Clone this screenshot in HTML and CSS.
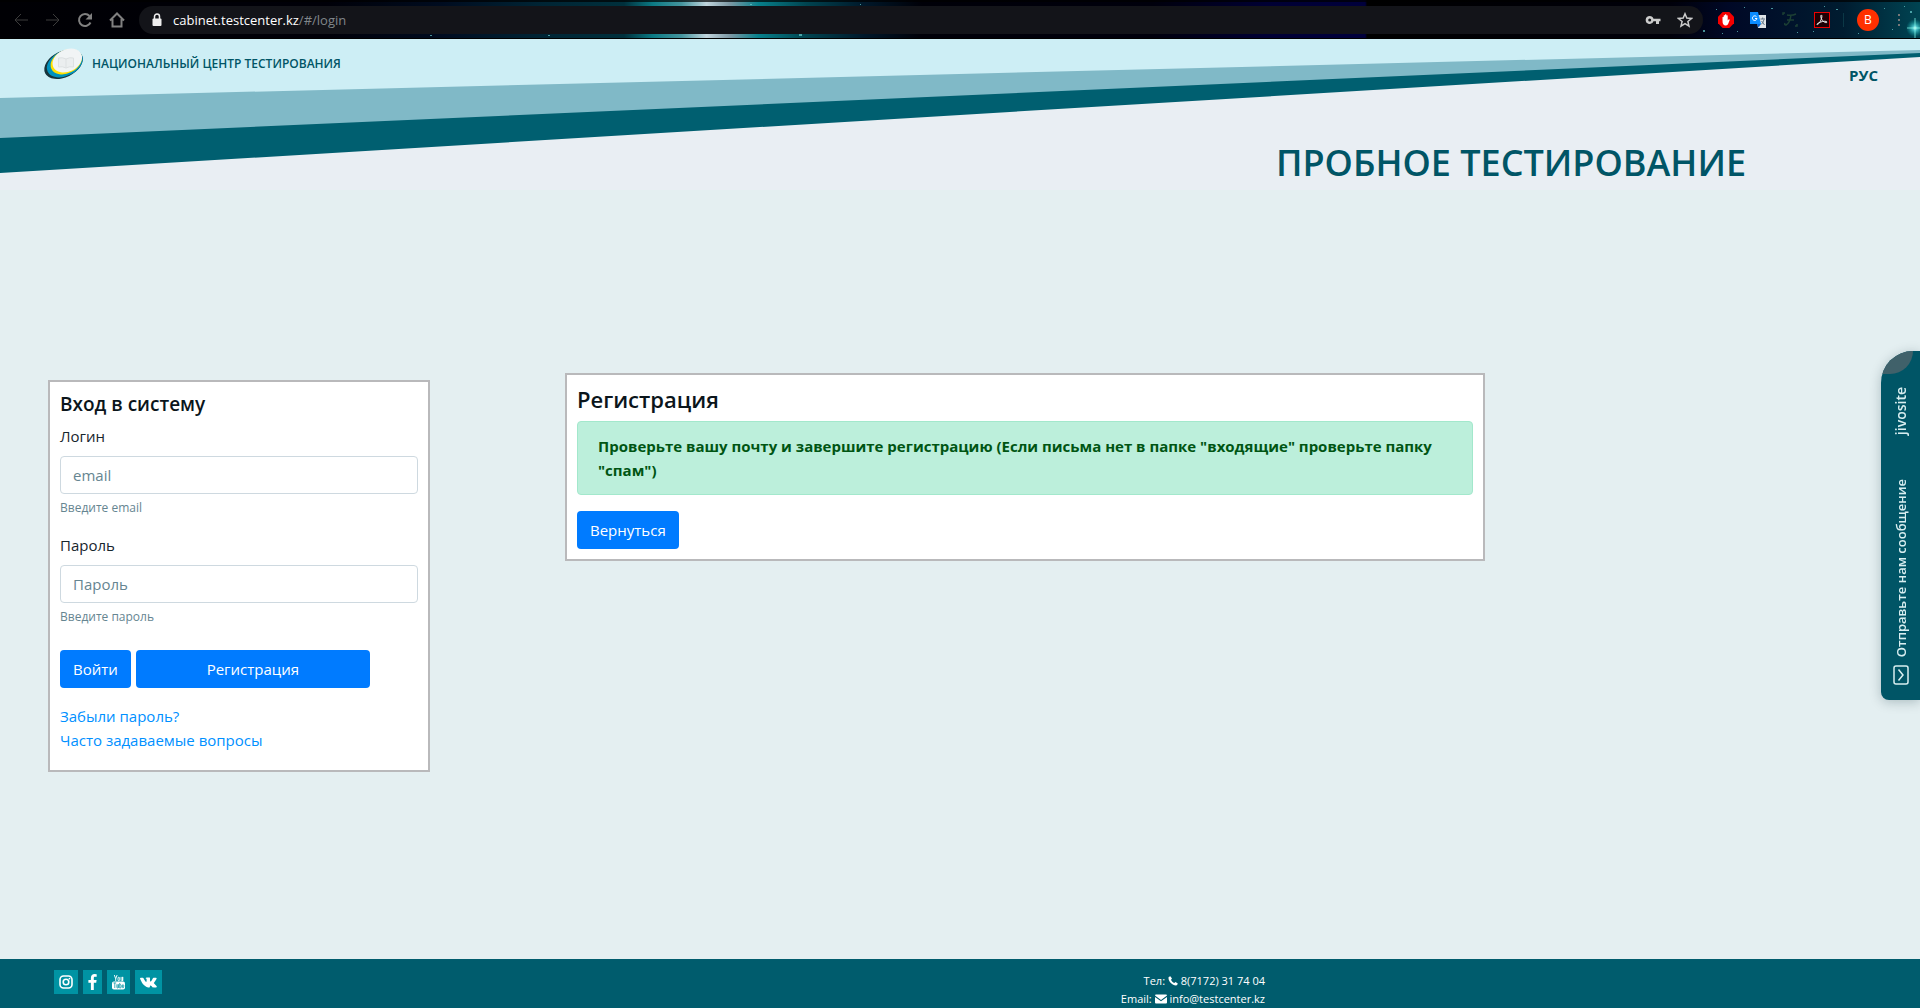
FILE: index.html
```
<!DOCTYPE html>
<html lang="ru">
<head>
<meta charset="utf-8">
<meta name="viewport" content="width=device-width, initial-scale=1">
<title>Пробное тестирование</title>
<link rel="stylesheet" href="styles.css">
</head>
<body>
<div class="toolbar">
  <svg class="stars" viewBox="0 0 1920 39" preserveAspectRatio="none" aria-hidden="true">
    <defs>
      <linearGradient id="sky">
        <stop offset="0" stop-color="#000004"/><stop offset=".17" stop-color="#000008"/><stop offset=".23" stop-color="#000c20"/>
        <stop offset=".28" stop-color="#002434"/><stop offset=".325" stop-color="#00303c"/><stop offset=".34" stop-color="#0b7a84"/>
        <stop offset=".355" stop-color="#45959e"/><stop offset=".368" stop-color="#c0d4dc"/><stop offset=".38" stop-color="#7d98a4"/>
        <stop offset=".395" stop-color="#07808b"/><stop offset=".42" stop-color="#004450"/><stop offset=".45" stop-color="#00182a"/>
        <stop offset=".48" stop-color="#000008"/><stop offset=".6" stop-color="#00000c"/><stop offset=".66" stop-color="#000034"/><stop offset=".711" stop-color="#00003c"/>
        <stop offset=".712" stop-color="#000"/><stop offset=".87" stop-color="#00000a"/><stop offset=".9" stop-color="#000826"/>
        <stop offset=".96" stop-color="#001c30"/><stop offset="1" stop-color="#004452"/>
      </linearGradient>
      <radialGradient id="glow"><stop offset="0" stop-color="#fff"/><stop offset=".25" stop-color="#5fe0e6" stop-opacity=".8"/><stop offset="1" stop-color="#0aa" stop-opacity="0"/></radialGradient>
    </defs>
    <rect width="1920" height="39" fill="url(#sky)"/>
    <rect width="1920" height="2" fill="#000" opacity=".7"/>
    <rect y="38" width="1920" height="1" fill="#000"/>
    <circle cx="1915" cy="28" r="9" fill="url(#glow)"/>
    <path d="M1915 18v20M1907 28h13" stroke="#8fe" stroke-width="1" opacity=".7"/>
    <g fill="#6cc" opacity=".7">
      <path d="M1703 30h2v2h-2zM1716 9h1v1h-1zM1744 7h1v1h-1zM1762 27h1v1h-1zM1771 8h2v1h-2zM1797 32h1v1h-1zM1824 6h1v1h-1zM1836 9h2v1h-2zM1858 33h1v1h-1zM1875 12h1v1h-1zM1884 8h1v1h-1zM1892 29h1v1h-1zM1904 6h1v1h-1zM1910 11h2v2h-2zM1722 33h1v1h-1zM1737 31h1v1h-1zM1813 31h1v1h-1zM750 4h2v1h-2zM799 34h3v2h-3zM860 4h1v1h-1zM548 35h2v1h-2zM430 35h2v1h-2z"/>
    </g>
  </svg>
  <nav class="toolbar-nav" aria-label="Навигация">
    <button type="button" class="tool dim" aria-label="Назад"><svg viewBox="0 0 16 16"><path d="M15 8H2M8 2 2 8l6 6"/></svg></button>
    <button type="button" class="tool dim" aria-label="Вперёд"><svg viewBox="0 0 16 16"><path d="M1 8h13M8 2l6 6-6 6"/></svg></button>
    <button type="button" class="tool" aria-label="Обновить"><svg viewBox="0 0 16 16"><path class="thick" d="M13.5 10.500A6 6 0 1 1 12.500 4"/><path class="solid" d="M15 1v6.500H8.500z"/></svg></button>
    <button type="button" class="tool" aria-label="Домой"><svg viewBox="0 0 16 16"><path class="thick" d="M1 8.500 8 1.500l7 7M3.500 7v7.500h9V7"/></svg></button>
  </nav>
  <div class="address">
    <svg class="lock" viewBox="0 0 10 14" aria-hidden="true"><path d="M2.500 6V3.500a2.500 2.500 0 0 1 5 0V6" fill="none" stroke="#eee" stroke-width="1.500"/><rect x=".5" y="5.500" width="9" height="7.500" rx="1" fill="#eee"/></svg>
    <span class="url">cabinet.testcenter.kz<span class="path">/#/login</span></span>
    <button type="button" class="tool bright" aria-label="Пароли"><svg viewBox="0 0 16 16"><path class="solid" fill-rule="evenodd" d="M4.700 4a4 4 0 1 0 3.800 5.200H11V12h3V9.200h1.500V6.800H8.500A4 4 0 0 0 4.700 4zm0 2.500a1.500 1.500 0 1 1 0 3 1.500 1.500 0 0 1 0-3z"/></svg></button>
    <button type="button" class="tool bright" aria-label="В закладки"><svg viewBox="0 0 16 16"><path class="thick" d="m8 1.800 1.800 4.300 4.700.4-3.600 3 1.100 4.600L8 11.700l-4 2.400 1.100-4.600-3.600-3 4.700-.4z"/></svg></button>
  </div>
  <div class="extensions">
    <button type="button" class="tool" aria-label="Блокировщик рекламы"><svg viewBox="0 0 16 16"><path fill="#f40000" stroke="none" d="M4.700 0h6.600L16 4.700v6.600L11.300 16H4.700L0 11.300V4.700z"/><path fill="#fff" stroke="none" d="M4.500 8.500V5.200q.7-.8 1.200 0V3.400q.7-.9 1.300 0v-.8q.7-.9 1.400 0v.9q.8-.7 1.300.1V8.500l1.100-1.300q1-.2.900.7L10 12.200Q8.800 14 7 13.500 4.500 13 4.500 8.500z"/></svg></button>
    <button type="button" class="tool" aria-label="Переводчик"><svg viewBox="0 0 16 16"><path fill="#dfe3e6" stroke="none" d="M6 3h10v13H8z"/><path fill="#0b8cff" stroke="none" d="M0 0h8l3 12H0z"/><path fill="#0563cf" stroke="none" d="m7 12 4 0-2.500 3.500z"/><path d="M6.500 4.700A2.300 2.300 0 1 0 7 6.500H5" stroke="#fff"/><path d="M10.500 7h4.500M12.700 5.500V7M14 7.500q-1 4-3 5M11.500 9l3 4" stroke="#678"/></svg></button>
    <button type="button" class="tool" aria-label="Шрифты"><svg viewBox="0 0 16 16"><path d="M5 3q5 1 9-1M9 3Q8 11 4 13q-2 0-1-2M5 8h7M1 3V1h2M13 14h2v-2" stroke="#1c4034" stroke-width="1.500"/></svg></button>
    <button type="button" class="tool" aria-label="PDF"><svg viewBox="0 0 16 16"><rect x=".5" y=".5" width="15" height="15" fill="#200004" stroke="#e00"/><path d="M3.200 12.700c1.500 0 5.300-6 4.600-9.200-.9-1.500-1.500 1-.4 3.300C8.800 9.500 12 11.600 13 10.200 13 8.500 7 9.200 3.500 11.500q-1 .9-.3 1.200z" stroke="#eee"/></svg></button>
    <span class="divider"></span>
    <button type="button" class="avatar">В</button>
    <button type="button" class="tool" aria-label="Меню"><svg viewBox="0 0 16 16"><path fill="#777" stroke="none" d="M7 2h2v2H7zM7 7h2v2H7zM7 12h2v2H7z"/></svg></button>
  </div>
</div>

<header class="header">
  <svg class="ribbon" viewBox="0 0 1920 151" preserveAspectRatio="none" aria-hidden="true">
    <path fill="#cdeef5" d="M0 0h1920v12L0 60z"/>
    <path fill="#80b9c7" d="M0 59 1920 11v5L0 100z"/>
    <path fill="#005f70" d="M0 99 1920 14v4L0 134z"/>
  </svg>
  <a class="brand" href="#">
    <svg class="logo" viewBox="0 0 40 30" aria-hidden="true">
      <g transform="rotate(-26 20 15)">
        <ellipse cx="19.500" cy="15" rx="20.500" ry="13" fill="#17343b"/>
        <ellipse cx="21" cy="14.800" rx="19" ry="12.500" fill="#0092bd"/>
        <ellipse cx="23" cy="14" rx="16.500" ry="11.500" fill="#ffe000"/>
        <ellipse cx="24.500" cy="13.300" rx="15.500" ry="11" fill="#f1f4f5"/>
      </g>
      <path d="M14.500 9q4-1 7.500 1 3.500-2 7.500-1v9q-4-1-7.500 1-3.500-2-7.500-1zM22 10v9" fill="#ebeeef" stroke="#dde1e2"/>
    </svg>
    <span>НАЦИОНАЛЬНЫЙ ЦЕНТР ТЕСТИРОВАНИЯ</span>
  </a>
  <a class="lang" href="#">РУС</a>
  <h1 class="headline">ПРОБНОЕ ТЕСТИРОВАНИЕ</h1>
</header>

<main class="main">
  <form class="card login">
    <h2 class="login-title">Вход в систему</h2>
    <div class="group">
      <label for="email">Логин</label>
      <input class="field" id="email" type="email" placeholder="email">
      <small class="hint">Введите email</small>
    </div>
    <div class="group">
      <label for="password">Пароль</label>
      <input class="field" id="password" type="password" placeholder="Пароль">
      <small class="hint">Введите пароль</small>
    </div>
    <div class="actions">
      <button class="btn" type="submit">Войти</button>
      <button class="btn btn-wide" type="button">Регистрация</button>
    </div>
    <div class="links">
      <a href="#">Забыли пароль?</a>
      <a href="#">Часто задаваемые вопросы</a>
    </div>
  </form>
  <section class="card">
    <h2 class="card-title">Регистрация</h2>
    <div class="alert" role="alert">Проверьте вашу почту и завершите регистрацию (Если письма нет в папке "входящие" проверьте папку "спам")</div>
    <button class="btn" type="button">Вернуться</button>
  </section>
</main>

<footer class="footer">
  <div class="social">
    <a href="#" aria-label="Instagram"><svg viewBox="0 0 14 14" width="14" height="14"><rect x="1" y="1" width="12" height="12" rx="3.500" fill="none" stroke="#fff" stroke-width="1.600"/><circle cx="7" cy="7" r="2.800" fill="none" stroke="#fff" stroke-width="1.600"/><circle cx="10.500" cy="3.600" r=".9" fill="#fff"/></svg></a>
    <a href="#" aria-label="Facebook"><svg viewBox="0 0 9 16" width="9" height="16"><path fill="#fff" d="M8.700.2v2.600H7.200C6 2.800 5.800 3.300 5.800 4.200V6h2.800l-.4 2.700H5.800V16H2.900V8.700H.4V6h2.500V3.900C2.900 1.400 4.400 0 6.600 0z"/></svg></a>
    <a href="#" aria-label="YouTube"><svg viewBox="0 0 14 16" width="13" height="16"><path d="m2.500.5 1.500 4V7m1.500-6.500L4 4.500M8 3.200q-1.500-1-1.500.5v2q0 1.500 1.300.8.400-.3.400-1V4q0-.6-.2-.8M9.800 2.500v3.700q.3 1.200 1.700 0V2.500V7" fill="none" stroke="#fff"/><rect y="7.500" width="14" height="8.500" rx="2" fill="#fff"/><path d="M1.500 9h3M3 9v5.500M5.200 10.500V14q.5.800 1.500 0v-3.500V14.500M8.300 9v5.500q1.500.2 1.500-1v-2q0-1-1.500-.5M12.800 13q-.2 1.500-1.300 1.200-.6-.3-.6-1.700 0-2 1.300-1.500.6.300.4 1.600h-1.700" fill="none" stroke="#0093a3" stroke-width=".8"/></svg></a>
    <a href="#" aria-label="ВКонтакте"><svg viewBox="0 0 18 11" width="17" height="11"><path fill="#fff" d="M8.800 10.700h1.100s.6-.1.600-.7c0-1.400.4-1.900 1.600-.8 1.100 1.200 1.400 1.500 2.300 1.500h2.400c1.300 0 1.300-.9.400-1.800l-2.200-2.300c-.4-.4-.4-.7 0-1.200l2-2.900c.8-1.200 1-2-.1-2h-2.400c-.6 0-.8.200-1 .7-.7 1.500-1.600 2.800-2.300 3.300-.5.200-.6-.2-.6-.8V1.400C10.600.6 10.500.3 9.900.2 8.700 0 7.300 0 6.400.5c-.7.400-.4.500 0 .7.600.2.700.8.600 2.300 0 1.900-.6 1.800-1.500.5C4.900 3.200 4.200 2 3.900 1.200 3.700.7 3.400.5 2.900.5H.8C.2.500-.1.800.1 1.400c1.500 3.500 3.600 8 8.700 9.300z"/></svg></a>
  </div>
  <address class="contacts">
    <span>Тел: <svg viewBox="0 0 10 10" width="10" height="10" aria-hidden="true"><path fill="#fff" d="M2.300.2.700 1C-.6 4.800 5 10.500 9 9.300l.8-1.800L7.500 6l-1.200 1C4.800 6.300 3.600 5.100 3 3.700l1-1.200z"/></svg> <a href="tel:+77172317404">8(7172) 31 74 04</a></span>
    <span>Email: <svg viewBox="0 0 12 10" width="12" height="10" aria-hidden="true"><path fill="#fff" d="M1 .500h10q1 0 1 1L6 6 0 1.500q0-1 1-1zM0 3l6 4.300L12 3v5.500q0 1-1 1H1q-1 0-1-1z"/></svg> <a href="mailto:info@testcenter.kz">info@testcenter.kz</a></span>
  </address>
</footer>

<button class="chat" type="button">
  <span class="leaf"></span>
  <span class="chat-brand">jivosite</span>
  <span class="chat-text">Отправьте нам сообщение</span>
  <svg class="chat-icon" viewBox="0 0 16 20" width="16" height="20" aria-hidden="true"><rect x="1" y="1" width="14" height="18" rx="2" fill="none" stroke="#d8eef0" stroke-width="1.500"/><path d="m5.500 4.500 4.500 5.500-4.500 5.500" fill="none" stroke="#d8eef0" stroke-width="1.500"/></svg>
</button>
</body>
</html>
```
FILE: styles.css
```
* { box-sizing: border-box; }

body {
  margin: 0;
  min-height: 100vh;
  display: flex;
  flex-direction: column;
  background: #e4eff1;
  color: #17262d;
  font: 15px/24px "Segoe UI", "Open Sans", "Noto Sans", sans-serif;
}

a { color: inherit; text-decoration: none; }
button, input { font: inherit; }
h1, h2 { margin: 0; font-weight: 600; }

/* Browser toolbar */
.toolbar {
  position: relative;
  display: flex;
  align-items: center;
  height: 39px;
  padding-left: 13px;
  background: #000;
}
.stars { position: absolute; inset: 0; width: 100%; height: 100%; }
.toolbar-nav, .address, .extensions { position: relative; display: flex; align-items: center; }
.toolbar-nav { gap: 16px; margin-right: 14px; }
.tool {
  width: 16px;
  height: 16px;
  padding: 0;
  border: 0;
  background: none;
  color: #808080;
}
.tool svg { display: block; width: 16px; height: 16px; fill: none; stroke: currentColor; }
.tool .thick { stroke-width: 2; }
.tool .solid { fill: currentColor; stroke: none; }
.dim { color: #3c3c3c; }
.bright { color: #ccc; }
.bright .thick { stroke-width: 1.5; }
.address {
  flex: 1;
  gap: 16px;
  height: 28px;
  padding: 0 10px 0 13px;
  border-radius: 14px;
  background: #131419;
}
.lock { width: 10px; height: 14px; }
.url { flex: 1; margin-left: -5px; color: #fff; font-size: 13px; }
.path { color: #80868a; }
.extensions { gap: 16px; padding: 0 13px 0 15px; }
.divider { width: 1px; height: 14px; margin: 0 -3px; background: #0b3846; }
.avatar {
  width: 22px;
  height: 22px;
  margin-right: -4px;
  padding: 0;
  border: 0;
  border-radius: 50%;
  background: #ff3000;
  color: #fff;
  font-size: 12px;
  line-height: 22px;
}

/* Page header */
.header {
  position: relative;
  display: grid;
  grid-template: 102px auto / 1fr auto;
  align-content: start;
  align-items: start;
  height: 151px;
  background: #e9eef3;
  color: #005566;
}
.ribbon { position: absolute; inset: 0; width: 100%; height: 100%; }
.brand {
  position: relative;
  display: flex;
  align-items: center;
  gap: 8px;
  margin: 10px 0 0 44px;
  font-size: 12px;
  font-weight: 600;
}
.logo { width: 40px; height: 30px; overflow: visible; }
.lang { position: relative; margin: 24px 42px 0 0; font-weight: 700; }
.headline {
  position: relative;
  grid-column: 1 / -1;
  justify-self: end;
  margin-right: 174px;
  font-size: 36px;
  line-height: 44px;
}

/* Content */
.main {
  flex: 1;
  display: grid;
  grid-template-columns: 382fr 920fr;
  align-items: start;
  gap: 135px;
  padding: 183px 435px 24px 48px;
}
.card { padding: 10px; border: 2px solid #b9b9bb; background: #fff; }
.login { margin-top: 7px; }
.login-title, .card-title { margin-bottom: 8px; color: #0b151b; }
.login-title { font-size: 19px; line-height: 24px; }
.card-title { font-size: 22px; line-height: 28px; }
.group { display: flex; flex-direction: column; margin-bottom: 16px; }
.group label { margin-bottom: 8px; }
.field {
  width: 100%;
  height: 38px;
  padding: 6px 12px;
  border: 1px solid #ced9e0;
  border-radius: 4px;
  background: #fff;
}
.field::placeholder { color: #668591; opacity: 1; }
.hint { margin-top: 4px; color: #668591; font-size: 12px; line-height: 19px; }
.btn {
  height: 38px;
  padding: 0 13px;
  border: 0;
  border-radius: 4px;
  background: #007bff;
  color: #fff;
}
.actions { display: flex; gap: 5px; margin-top: 24px; }
.btn-wide { width: 234px; }
.links { display: flex; flex-direction: column; align-items: flex-start; margin: 16px 0 8px; color: #0090ff; }
.alert {
  margin-bottom: 16px;
  padding: 12px 20px;
  border: 1px solid #a3e8cc;
  border-radius: 4px;
  background: #bcefdb;
  color: #005513;
  font-weight: 700;
}

/* Footer */
.footer {
  display: grid;
  grid-template-columns: 1265fr 655fr;
  background: #005c6d;
  color: #fff;
}
.social, .contacts { grid-row: 1; grid-column: 1; }
.social { display: flex; align-items: start; gap: 5px; padding: 11px 0 0 54px; }
.social a { display: flex; align-items: center; height: 24px; padding: 0 5px; background: #0093a3; }
.contacts {
  justify-self: end;
  display: flex;
  flex-direction: column;
  align-items: flex-end;
  padding-top: 13px;
  font-size: 11px;
  line-height: 18px;
  font-style: normal;
}
.contacts svg { vertical-align: -1px; }

/* Chat tab on the window's right edge */
.chat {
  position: fixed;
  top: 351px;
  right: 0;
  display: flex;
  flex-direction: column;
  align-items: center;
  width: 39px;
  height: 349px;
  padding: 36px 0 15px;
  border: 0;
  border-radius: 32px 0 0 8px;
  background: #005566;
  box-shadow: 0 2px 12px rgba(0, 40, 50, .25);
  color: #d8eef0;
  overflow: hidden;
}
.leaf {
  position: absolute;
  top: 0;
  left: 0;
  width: 32px;
  height: 23px;
  border-radius: 0 0 32px 0;
  background: #40616a;
}
.chat-icon { margin-top: 8px; }
.chat-text, .chat-brand {
  writing-mode: vertical-rl;
  transform: rotate(180deg);
  font-weight: 600;
  line-height: 18px;
  white-space: nowrap;
}
.chat-text { margin-top: auto; font-size: 13px; }
.chat-brand { font-size: 14px; }

@media (max-width: 1200px) {
  .main { gap: 32px; padding: 48px; }
}
```
